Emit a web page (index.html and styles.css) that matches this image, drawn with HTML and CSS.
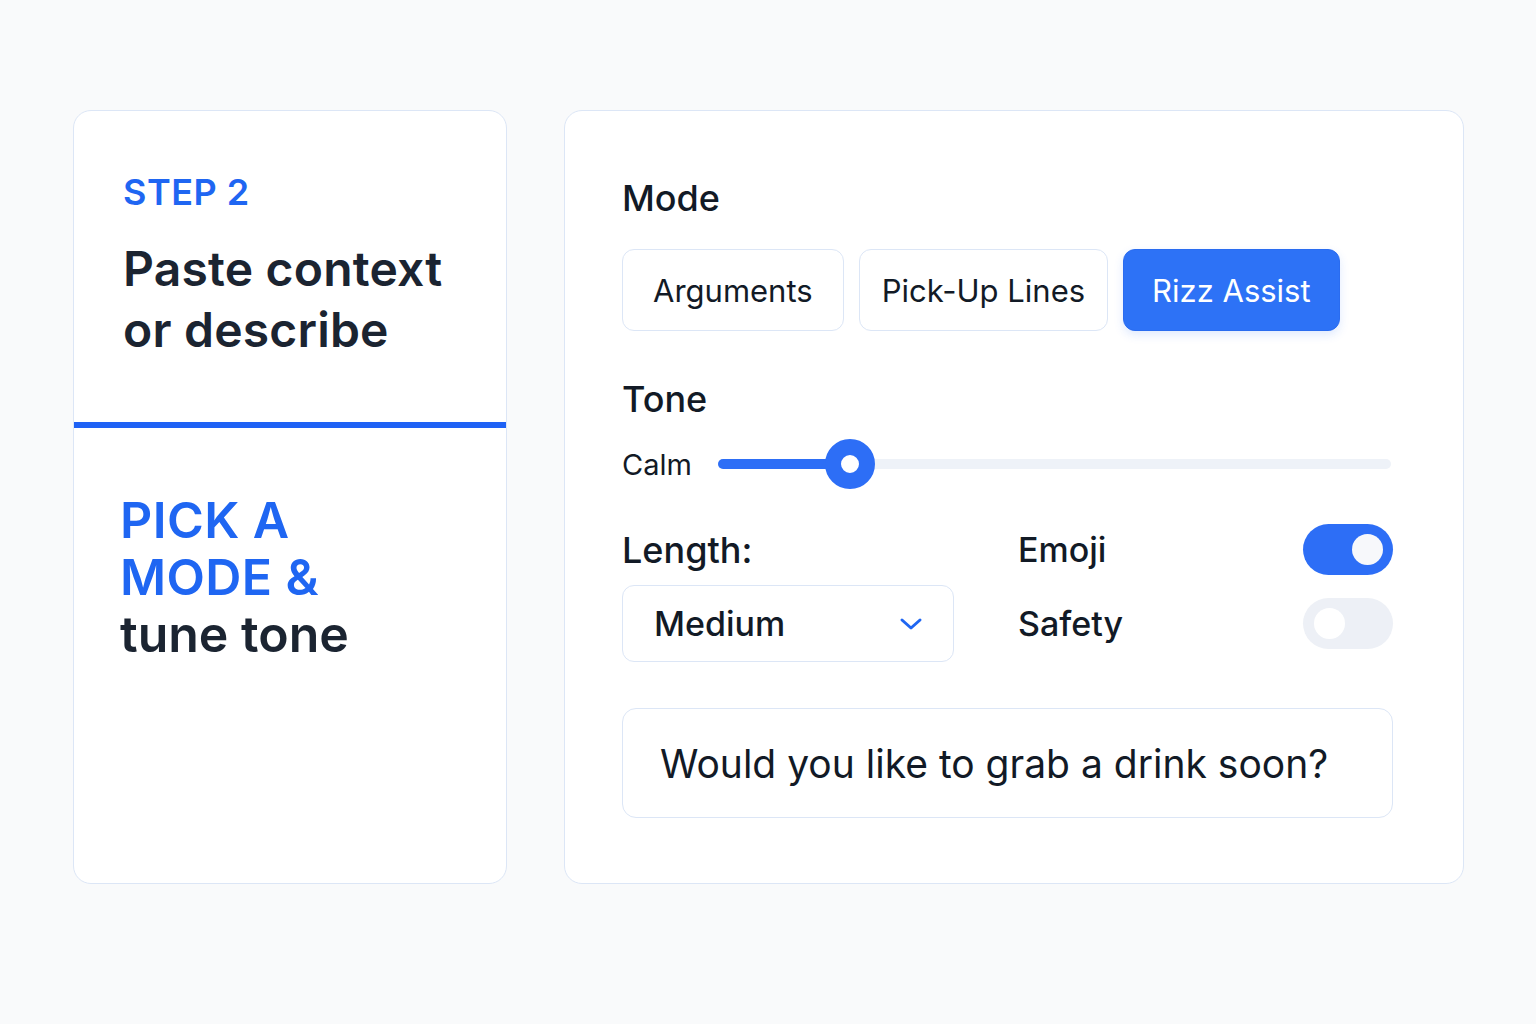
FILE: index.html
```html
<!DOCTYPE html>
<html>
<head>
<meta charset="utf-8">
<title>Step 2 - Mode &amp; Tone</title>
<link rel="stylesheet" href="styles.css">
</head>
<body>
<div class="page">
  <div class="steps">
    <div class="step-top">
      <div class="step-no">STEP 2</div>
      <h2 class="step-title">Paste context<br>or describe</h2>
    </div>
    <div class="divider"></div>
    <div class="step-bottom">
      <div class="pick"><span class="blue">PICK A<br>MODE &amp;</span><br>tune tone</div>
    </div>
  </div>

  <div class="panel">
    <div class="label">Mode</div>
    <div class="modes">
      <button class="mode">Arguments</button>
      <button class="mode">Pick-Up Lines</button>
      <button class="mode active">Rizz Assist</button>
    </div>

    <div class="label tone-label">Tone</div>
    <div class="slider-row">
      <span class="calm">Calm</span>
      <div class="track">
        <div class="fill" style="width:132px"></div>
        <div class="thumb" style="left:132px"></div>
      </div>
    </div>

    <div class="options">
      <div class="label len-label">Length:</div>
      <div class="opt-row">
        <span class="opt-name">Emoji</span>
        <div class="toggle on"><div class="knob"></div></div>
      </div>
      <div class="select">
        <span>Medium</span>
        <svg width="24" height="16" viewBox="0 0 24 16"><path d="M3 4 L12 12 L21 4" fill="none" stroke="#1f66f2" stroke-width="3" stroke-linecap="round" stroke-linejoin="round"/></svg>
      </div>
      <div class="opt-row">
        <span class="opt-name">Safety</span>
        <div class="toggle"><div class="knob"></div></div>
      </div>
    </div>

    <div class="output">Would you like to grab a drink soon?</div>
  </div>
</div>
</body>
</html>
```

FILE: styles.css
```css
*{
  box-sizing:border-box;
}
body{
  margin:0;
  background:#f9fafb;
  font-family:Inter,"Noto Sans",sans-serif;
  color:#161e2b;
}
.page{
  display:flex;
  gap:57px;
  padding:110px 0 0 73px;
}
.steps{
  width:434px;
  height:774px;
  background:#fff;
  border:1.5px solid #dce6f6;
  border-radius:18px;
  overflow:hidden;
}
.step-top{
  height:311px;
  padding:59px 0 0 49px;
}
.step-no{
  color:#1f66f2;
  font-size:36px;
  line-height:44px;
  font-weight:600;
  letter-spacing:0.5px;
}
.step-title{
  margin:24px 0 0;
  font-size:48px;
  line-height:61px;
  font-weight:600;
  color:#1b2431;
  letter-spacing:0.2px;
}
.divider{
  height:6px;
  background:#1f62f5;
}
.step-bottom{
  padding:64px 0 0 46px;
}
.pick{
  font-size:50px;
  line-height:57px;
  font-weight:600;
  color:#1b2431;
}
.blue{
  color:#1f66f2;
  letter-spacing:0.4px;
}
.panel{
  width:900px;
  height:774px;
  background:#fff;
  border:1.5px solid #dce6f6;
  border-radius:18px;
  padding:66px 0 0 57px;
}
.label{
  font-size:36px;
  line-height:42px;
  font-weight:500;
  color:#121a26;
}
.modes{
  display:flex;
  gap:15px;
  margin-top:30px;
}
.mode{
  height:82px;
  padding:0 30px;
  background:#fff;
  border:1.5px solid #dce6f6;
  border-radius:12px;
  font-family:inherit;
  font-size:31px;
  color:#121a26;
}
.mode:nth-child(2){
  padding:0 22px;
}
.mode.active{
  padding:0 28px;
  background:#2d72f6;
  border-color:#2a6cf0;
  color:#fff;
  box-shadow:0 4px 10px rgba(45,114,246,0.15);
}
.tone-label{
  margin-top:47px;
}
.slider-row{
  display:flex;
  align-items:center;
  height:50px;
  margin-top:19px;
}
.calm{
  font-size:29px;
  color:#121a26;
  width:96px;
}
.track{
  position:relative;
  width:673px;
  height:10px;
  border-radius:5px;
  background:#eef2f8;
}
.fill{
  height:10px;
  border-radius:5px;
  background:#2d6ef6;
}
.thumb{
  position:absolute;
  top:50%;
  width:50px;
  height:50px;
  margin:-25px 0 0 -25px;
  border-radius:50%;
  background:#fff;
  border:16px solid #2d6ef6;
}
.options{
  display:grid;
  grid-template-columns:332px 375px;
  grid-template-rows:51px 77px;
  column-gap:64px;
  row-gap:10px;
  margin-top:35px;
}
.len-label{
  align-self:center;
}
.opt-row{
  display:flex;
  align-items:center;
  justify-content:space-between;
  height:51px;
}
.options > .opt-row:last-child{
  align-self:center;
}
.opt-name{
  font-size:34px;
  font-weight:500;
  color:#121a26;
}
.select{
  display:flex;
  align-items:center;
  justify-content:space-between;
  padding:0 30px 0 31px;
  border:1.5px solid #dce6f6;
  border-radius:12px;
  font-size:34px;
  font-weight:500;
  color:#121a26;
}
.toggle{
  position:relative;
  width:90px;
  height:51px;
  border-radius:26px;
  background:#edf0f6;
}
.toggle.on{
  background:#2d6ef6;
}
.knob{
  position:absolute;
  top:10px;
  left:11px;
  width:31px;
  height:31px;
  border-radius:50%;
  background:#fff;
}
.toggle.on .knob{
  left:49px;
  background:#f7f8fb;
}
.output{
  width:771px;
  height:110px;
  margin-top:46px;
  padding:0 0 0 37px;
  display:flex;
  align-items:center;
  border:1.5px solid #dce6f6;
  border-radius:14px;
  font-size:39px;
  color:#121a26;
}
```
